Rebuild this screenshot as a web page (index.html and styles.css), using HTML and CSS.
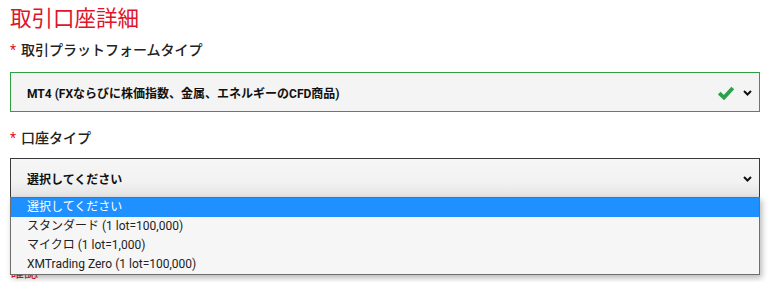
FILE: index.html
```html
<!DOCTYPE html>
<html lang="ja">
<head>
<meta charset="utf-8">
<link rel="stylesheet" href="styles.css">
</head>
<body>
<div class="form">
  <h1 class="title">取引口座詳細</h1>
  <div class="label"><span class="req">*</span>取引プラットフォームタイプ</div>
  <div class="select valid">
    <span class="value">MT4 (FXならびに株価指数、金属、エネルギーのCFD商品)</span>
    <svg class="check" width="18" height="16" viewBox="0 0 18 16"><path d="M2.2 8.2 L7 12.6 L15.8 3" fill="none" stroke="#2aa14a" stroke-width="3.8"/></svg>
    <svg class="chev" width="9" height="6" viewBox="0 0 9 6"><path d="M1 1 L4.5 4.5 L8 1" fill="none" stroke="#111" stroke-width="2"/></svg>
  </div>
  <div class="label second"><span class="req">*</span>口座タイプ</div>
  <div class="select-wrap">
    <div class="select open">
      <span class="value">選択してください</span>
      <svg class="chev" width="9" height="6" viewBox="0 0 9 6"><path d="M1 1 L4.5 4.5 L8 1" fill="none" stroke="#111" stroke-width="2"/></svg>
    </div>
    <ul class="options">
      <li class="opt active">選択してください</li>
      <li class="opt">スタンダード (1 lot=100,000)</li>
      <li class="opt">マイクロ (1 lot=1,000)</li>
      <li class="opt">XMTrading Zero (1 lot=100,000)</li>
    </ul>
  </div>
  <div class="label under">確認</div>
</div>
</body>
</html>
```
FILE: styles.css
```css
* { box-sizing: border-box; }
body {
  margin: 0;
  background: #fff;
  font-family: Roboto, "Noto Sans CJK JP", sans-serif;
  color: #222;
}
.form {
  padding: 4px 0 0 10px;
  width: 760px;
}
.title {
  margin: 0;
  font-size: 21.5px;
  line-height: 30px;
  font-weight: 400;
  color: #e0142a;
}
.label {
  margin-top: 6px;
  font-size: 14px;
  line-height: 20px;
  font-weight: 500;
  color: #222;
}
.req {
  color: #e0142a;
  margin-right: 5px;
  font-weight: 400;
}
.label.second { margin-top: 16px; }
.select {
  margin-top: 12px;
  height: 40px;
  width: 750px;
  display: flex;
  align-items: center;
  padding: 0 7px 0 16px;
  border: 1px solid #333;
  background: #f4f4f4;
}
.select.valid {
  border-color: #2ea043;
  background: #f4f4f4;
}
.value {
  flex: 1;
  font-size: 12px;
  font-weight: 700;
  color: #111;
}
.check { margin-right: 8px; margin-top: 1px; }
.chev { margin-top: 1px; }
.select-wrap {
  position: relative;
  margin-top: 10px;
}
.select-wrap .select { margin-top: 0; }
.select.open {
  background: linear-gradient(#f6f6f6 0%, #f2f2f2 60%, #e4e4e4 100%);
  border-color: #3a3a3a;
  height: 40px;
}
.options {
  position: absolute;
  left: 0;
  top: 39px;
  width: 750px;
  margin: 0;
  padding: 0;
  list-style: none;
  background: #f6f6f6;
  border: 1px solid #6e6e6e;
  box-shadow: 2px 3px 6px rgba(0,0,0,0.28);
  z-index: 2;
}
.opt {
  height: 19px;
  line-height: 19px;
  padding-left: 16px;
  font-size: 12px;
  color: #222;
}
.opt.active {
  background: #1e90ff;
  color: #fff;
}
.label.under {
  margin-top: 64px;
  color: #e0142a;
  font-weight: 400;
}
```
